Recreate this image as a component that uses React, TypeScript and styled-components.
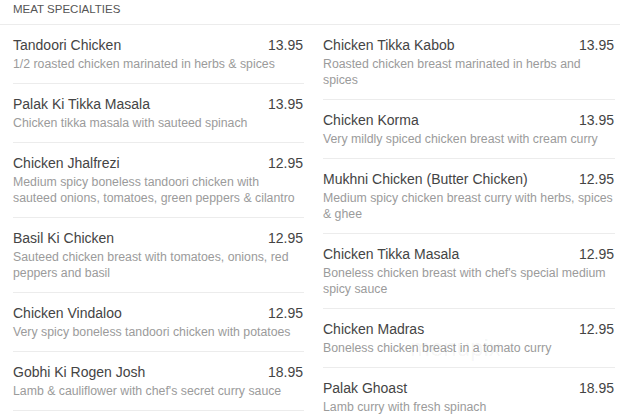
import styled, { createGlobalStyle } from 'styled-components'

type Dish = { name: string; price: string; desc: string }

const leftDishes: Dish[] = [
  { name: 'Tandoori Chicken', price: '13.95', desc: '1/2 roasted chicken marinated in herbs & spices' },
  { name: 'Palak Ki Tikka Masala', price: '13.95', desc: 'Chicken tikka masala with sauteed spinach' },
  { name: 'Chicken Jhalfrezi', price: '12.95', desc: 'Medium spicy boneless tandoori chicken with sauteed onions, tomatoes, green peppers & cilantro' },
  { name: 'Basil Ki Chicken', price: '12.95', desc: 'Sauteed chicken breast with tomatoes, onions, red peppers and basil' },
  { name: 'Chicken Vindaloo', price: '12.95', desc: 'Very spicy boneless tandoori chicken with potatoes' },
  { name: 'Gobhi Ki Rogen Josh', price: '18.95', desc: "Lamb & cauliflower with chef's secret curry sauce" },
]

const rightDishes: Dish[] = [
  { name: 'Chicken Tikka Kabob', price: '13.95', desc: 'Roasted chicken breast marinated in herbs and spices' },
  { name: 'Chicken Korma', price: '13.95', desc: 'Very mildly spiced chicken breast with cream curry' },
  { name: 'Mukhni Chicken (Butter Chicken)', price: '12.95', desc: 'Medium spicy chicken breast curry with herbs, spices & ghee' },
  { name: 'Chicken Tikka Masala', price: '12.95', desc: "Boneless chicken breast with chef's special medium spicy sauce" },
  { name: 'Chicken Madras', price: '12.95', desc: 'Boneless chicken breast in a tomato curry' },
  { name: 'Palak Ghoast', price: '18.95', desc: 'Lamb curry with fresh spinach' },
]

const App = () => {
  return (
    <Wrapper>
      <GlobalStyle />
      <Heading>Meat Specialties</Heading>
      <Columns>
        {[leftDishes, rightDishes].map((list, i) => (
          <Column key={i}>
            {list.map((dish) => (
              <Item key={dish.name}>
                <TitleRow>
                  <Name>{dish.name}</Name>
                  <Price>{dish.price}</Price>
                </TitleRow>
                <Desc>{dish.desc}</Desc>
              </Item>
            ))}
          </Column>
        ))}
      </Columns>
      <Watermark>menupix</Watermark>
    </Wrapper>
  )
}

const GlobalStyle = createGlobalStyle`
  body {
    margin: 0;
    background: #fff;
    font-family: "Liberation Sans", Arial, sans-serif;
  }
`

const Wrapper = styled.main`
  position: relative;
  width: 620px;
  height: 417px;
  overflow: hidden;
`

const Heading = styled.h4`
  margin: 0;
  height: 25px;
  padding: 0 13px;
  box-sizing: border-box;
  border-bottom: 1px solid #ececec;
  font-size: 11.5px;
  font-weight: normal;
  line-height: 19px;
  text-transform: uppercase;
  color: #555;
`

const Columns = styled.div`
  display: grid;
  grid-template-columns: 291px 292px;
  column-gap: 19px;
  padding: 0 5px 0 13px;
`

const Column = styled.div`
  display: flex;
  flex-direction: column;
`

const Item = styled.div`
  padding: 9px 0 11px;
  border-bottom: 1px solid #ececec;
`

const TitleRow = styled.div`
  display: flex;
  justify-content: space-between;
  align-items: baseline;
  line-height: 22px;
  font-size: 14px;
  color: #444;
`

const Name = styled.span``

const Price = styled.span`
  padding-right: 1px;
`

const Desc = styled.p`
  margin: 0;
  font-size: 12.3px;
  line-height: 16px;
  color: #9b9b9b;
`

const Watermark = styled.div`
  position: absolute;
  left: 410px;
  top: 334px;
  font-size: 24px;
  color: rgba(0, 0, 0, 0.05);
  pointer-events: none;
`

export default App
